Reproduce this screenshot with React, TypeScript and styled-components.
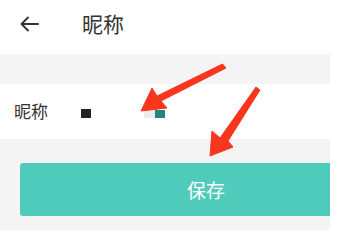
import React from 'react'
import styled, { createGlobalStyle } from 'styled-components'

const GlobalStyle = createGlobalStyle`
  html, body {
    margin: 0;
    padding: 0;
    background: #ffffff;
  }
  body {
    font-family: "Noto Sans CJK SC", "Noto Sans", sans-serif;
  }
`

const Screen = styled.div`
  position: relative;
  width: 347px;
  height: 230px;
  overflow: hidden;
  background: #ffffff;
`

const Page = styled.div`
  width: 330px;
  height: 230px;
  overflow: hidden;
  background: #f4f4f4;
  display: flex;
  flex-direction: column;
`

const TopBar = styled.div`
  height: 54px;
  flex-shrink: 0;
  background: #ffffff;
  display: flex;
  align-items: center;
  padding-left: 19px;
  box-sizing: border-box;
`

const BackButton = styled.div`
  width: 20px;
  height: 20px;
  display: flex;
  align-items: center;
  justify-content: center;
  color: #333333;
  margin-top: -7px;
`

const Title = styled.div`
  margin-left: 43px;
  margin-top: -7px;
  font-size: 21px;
  color: #333333;
  line-height: 1;
`

const Gap = styled.div<{ $h: number }>`
  height: ${(p) => p.$h}px;
  flex-shrink: 0;
`

const FieldRow = styled.div`
  height: 55px;
  flex-shrink: 0;
  background: #ffffff;
  display: flex;
  align-items: center;
  padding-left: 14px;
  box-sizing: border-box;
`

const Label = styled.div`
  font-size: 17px;
  color: #333333;
  line-height: 1;
  width: 67px;
  margin-top: -3px;
`

const Masked = styled.div`
  width: 10px;
  height: 9px;
  background: #222222;
  margin-top: 4px;
`

const Swatch = styled.div`
  margin-left: 53px;
  margin-top: 5px;
  display: flex;
  height: 8px;
`

const SwatchPart = styled.div<{ $c: string; $w: number }>`
  width: ${(p) => p.$w}px;
  background: ${(p) => p.$c};
`

const SaveButton = styled.button`
  flex-shrink: 0;
  margin-left: 20px;
  width: 372px;
  height: 53px;
  border: none;
  border-radius: 3px;
  background: #4ecbba;
  color: #ffffff;
  font-family: "Noto Sans CJK SC", "Noto Sans", sans-serif;
  font-size: 19px;
  padding: 0;
  display: flex;
  align-items: center;
  justify-content: center;
`

const Overlay = styled.svg`
  position: absolute;
  left: 0;
  top: 0;
  pointer-events: none;
`

const BackArrow = () => (
  <svg width="19" height="16" viewBox="0 0 19 16" fill="none" stroke="#333" strokeWidth="1.9" strokeLinecap="round" strokeLinejoin="round">
    <path d="M18 8H2" />
    <path d="M8 1.5L1.5 8L8 14.5" />
  </svg>
)

const App = () => {
  return (
    <>
      <GlobalStyle />
      <Screen>
        <Page>
          <TopBar>
            <BackButton>
              <BackArrow />
            </BackButton>
            <Title>昵称</Title>
          </TopBar>
          <Gap $h={30} />
          <FieldRow>
            <Label>昵称</Label>
            <Masked />
            <Swatch>
              <SwatchPart $c="#e9ecea" $w={11} />
              <SwatchPart $c="#1f8878" $w={10} />
            </Swatch>
          </FieldRow>
          <Gap $h={24} />
          <SaveButton>保存</SaveButton>
        </Page>
        <Overlay width="347" height="230" viewBox="0 0 347 230">
          <path d="M222.5 64 L226 68 L161 101 L167 108 L141 111 L152 88 L157 96 Z" fill="#f8361d" stroke="#f8361d" strokeWidth="1" strokeLinejoin="round" />
          <path d="M256 87 L260 90 L228 141 L233 147 L210 156 L212 131 L220 138 Z" fill="#f8361d" stroke="#f8361d" strokeWidth="1" strokeLinejoin="round" />
        </Overlay>
      </Screen>
    </>
  )
}

export default App
